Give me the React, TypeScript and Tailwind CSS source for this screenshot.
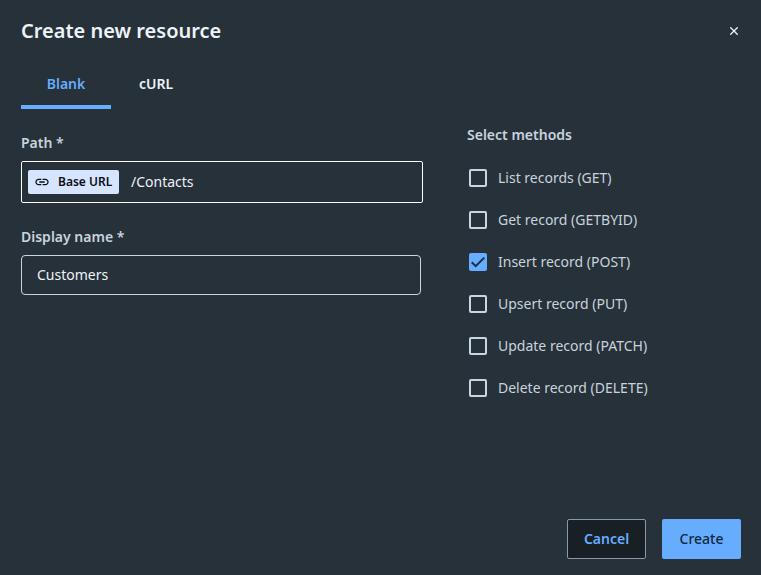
import { useState } from "react";

const METHODS = [
  { id: "list", label: "List records (GET)" },
  { id: "get", label: "Get record (GETBYID)" },
  { id: "insert", label: "Insert record (POST)" },
  { id: "upsert", label: "Upsert record (PUT)" },
  { id: "update", label: "Update record (PATCH)" },
  { id: "delete", label: "Delete record (DELETE)" },
];

function LinkIcon() {
  return (
    <svg viewBox="0 0 24 24" className="size-4" fill="currentColor" aria-hidden="true">
      <path d="M3.9 12c0-1.71 1.39-3.1 3.1-3.1h4V7H7c-2.76 0-5 2.24-5 5s2.24 5 5 5h4v-1.9H7c-1.71 0-3.1-1.39-3.1-3.1zM8 13h8v-2H8v2zm9-6h-4v1.9h4c1.71 0 3.1 1.39 3.1 3.1s-1.39 3.1-3.1 3.1h-4V17h4c2.76 0 5-2.24 5-5s-2.24-5-5-5z" />
    </svg>
  );
}

function CloseIcon() {
  return (
    <svg viewBox="0 0 8 8" className="size-2" fill="none" stroke="currentColor" strokeWidth="1.3" aria-hidden="true">
      <path d="M0.3 0.3 7.7 7.7M7.7 0.3 0.3 7.7" />
    </svg>
  );
}

function MethodOption({ id, label, defaultChecked }: { id: string; label: string; defaultChecked: boolean }) {
  return (
    <label htmlFor={id} className="flex h-[42px] items-center gap-[11px] pl-0.5 text-sm text-[#c8d3de]">
      <span className="grid size-[18px] shrink-0">
        <input
          id={id}
          type="checkbox"
          defaultChecked={defaultChecked}
          className="peer col-start-1 row-start-1 size-[18px] appearance-none rounded-xs border-2 border-[#c9d5e1] checked:border-[#66adff] checked:bg-[#66adff]"
        />
        <svg
          viewBox="0 0 18 18"
          className="pointer-events-none invisible col-start-1 row-start-1 size-[18px] peer-checked:visible"
          fill="none"
          stroke="#1c2f42"
          strokeWidth="2"
          aria-hidden="true"
        >
          <path d="M2.7 9.3 6.7 13.2 15.3 4.6" />
        </svg>
      </span>
      {label}
    </label>
  );
}

export default function App() {
  const [tab, setTab] = useState("blank");
  const active = "border-[#66adff] text-[#66adff]";
  const idle = "border-transparent text-[#eef3f8]";

  return (
    <form
      onSubmit={(e) => e.preventDefault()}
      className="flex min-h-screen flex-col bg-[#273139] pr-5 pl-[21px] font-['Noto_Sans',sans-serif] text-sm text-[#eef3f8]"
    >
      <header className="flex items-center justify-between pt-4">
        <h1 className="text-xl leading-[30px] font-semibold">Create new resource</h1>
        <button type="button" aria-label="Close" className="p-[3px]">
          <CloseIcon />
        </button>
      </header>

      <div role="tablist" className="mt-4 flex font-semibold">
        <button
          type="button"
          role="tab"
          aria-selected={tab === "blank"}
          onClick={() => setTab("blank")}
          className={`h-[47px] w-[90px] border-b-4 ${tab === "blank" ? active : idle}`}
        >
          Blank
        </button>
        <button
          type="button"
          role="tab"
          aria-selected={tab === "curl"}
          onClick={() => setTab("curl")}
          className={`h-[47px] w-[90px] border-b-4 ${tab === "curl" ? active : idle}`}
        >
          cURL
        </button>
      </div>

      <div className="grid grid-cols-[402fr_274fr] gap-x-11">
        <div className="pt-6">
          <label htmlFor="path" className="block leading-5 font-semibold text-[#c8d3de]">
            Path *
          </label>
          <div className="mt-2 flex h-[42px] items-center gap-3 rounded-xs border border-white px-1.5">
            <span className="flex h-6 w-[91px] shrink-0 items-center gap-2 rounded-xs bg-[#d6e4fd] px-1.5 text-xs font-semibold text-[#0b0f14]">
              <LinkIcon />
              Base URL
            </span>
            <input id="path" type="text" defaultValue="/Contacts" className="w-full min-w-0 bg-transparent outline-none" />
          </div>

          <label htmlFor="display-name" className="mt-6 block leading-5 font-semibold text-[#c8d3de]">
            Display name *
          </label>
          <div className="mt-2 pr-0.5">
            <input
              id="display-name"
              type="text"
              defaultValue="Customers"
              className="block h-10 w-full rounded-sm border border-[#c9d5e1] bg-transparent px-[15px] pb-0.5 outline-none"
            />
          </div>
        </div>

        <fieldset className="pt-4">
          <legend className="contents">
            <span className="block leading-5 font-semibold text-[#c8d3de]">Select methods</span>
          </legend>
          <div className="pt-3">
            {METHODS.map((m) => (
              <MethodOption key={m.id} id={m.id} label={m.label} defaultChecked={m.id === "insert"} />
            ))}
          </div>
        </fieldset>
      </div>

      <footer className="mt-auto flex justify-end gap-4 pt-4 pb-4 font-semibold">
        <button type="button" className="h-10 min-w-[79px] rounded-xs border border-[#8b98a5] bg-[#182026] px-3 text-[#66adff]">
          Cancel
        </button>
        <button type="submit" className="h-10 min-w-[79px] rounded-xs bg-[#66adff] px-3 font-medium text-[#14283c]">
          Create
        </button>
      </footer>
    </form>
  );
}
